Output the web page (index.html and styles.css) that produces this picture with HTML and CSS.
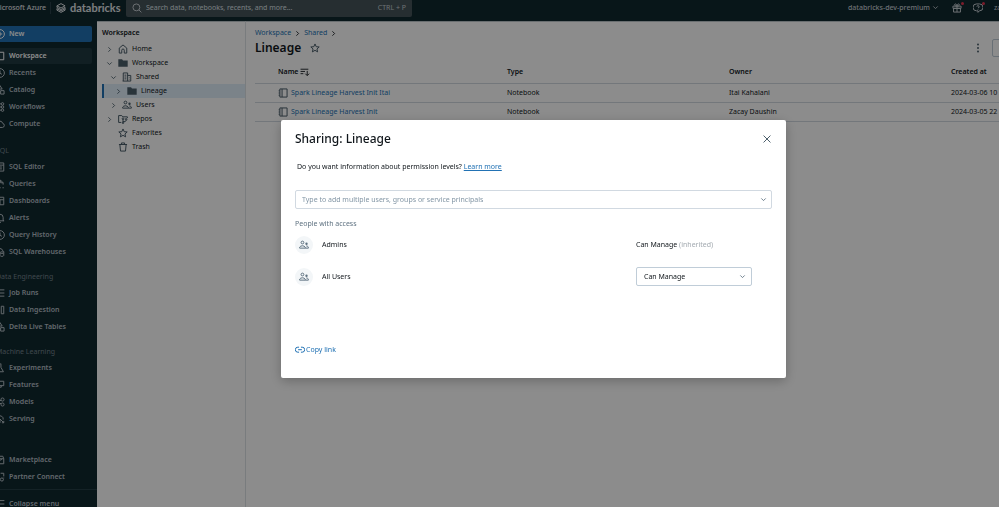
FILE: index.html
```html
<!DOCTYPE html>
<html lang="en">
<head>
    <meta charset="UTF-8">
    <meta name="viewport" content="width=device-width, initial-scale=1.0">
    <title>Lineage - Databricks</title>
    <link rel="stylesheet" href="styles.css">
</head>
<body>
    <!-- Icon set -->
    <svg class="sprite" aria-hidden="true">
        <symbol id="i-chevron-right" viewBox="0 0 16 16"><path d="M5.5 3l5 5-5 5"/></symbol>
        <symbol id="i-chevron-down" viewBox="0 0 16 16"><path d="M3 5.5l5 5 5-5"/></symbol>
        <symbol id="i-search" viewBox="0 0 16 16"><circle cx="7" cy="7" r="5.5"/><path d="M11 11l4 4"/></symbol>
        <symbol id="i-plus" viewBox="0 0 16 16"><circle cx="8" cy="8" r="7"/><path d="M8 4.5v7M4.5 8h7"/></symbol>
        <symbol id="i-square" viewBox="0 0 16 16"><path d="M2 2h12v12H2z"/></symbol>
        <symbol id="i-clock" viewBox="0 0 16 16"><circle cx="8" cy="8" r="7"/><path d="M8 4v4.5l3 1.5"/></symbol>
        <symbol id="i-shapes" viewBox="0 0 16 16"><path d="M8 1l3.5 5.500h-7zM9 9h5.500v5.500H9z"/><circle cx="4" cy="11.500" r="3"/></symbol>
        <symbol id="i-flow" viewBox="0 0 16 16"><path d="M1 3h9M3 8h8M3 8a2.500 2.500 0 0 0 0 5h7"/><circle cx="12" cy="3" r="2"/><circle cx="12" cy="8" r="2"/><circle cx="12" cy="13" r="2"/></symbol>
        <symbol id="i-cloud" viewBox="0 0 16 16"><path d="M4 13.500a3.300 3.300 0 0 1-.5-6.500 4.500 4.500 0 0 1 8.800 0 3.300 3.300 0 0 1-.3 6.500z"/></symbol>
        <symbol id="i-editor" viewBox="0 0 16 16"><path d="M2 1.500h12v13H2zM2 5h12M5 8h6M5 11h6"/></symbol>
        <symbol id="i-query" viewBox="0 0 16 16"><path d="M2 14V2h7l4 4v3M9 2v4h4M7 14h2M12 14h2"/></symbol>
        <symbol id="i-dashboard" viewBox="0 0 16 16"><path d="M2 2h12v12H2zM2 6h12M8 6v8"/></symbol>
        <symbol id="i-bell" viewBox="0 0 16 16"><path d="M3 12V7a5 5 0 0 1 10 0v5l1.500.5h-13zM6.500 15h3"/></symbol>
        <symbol id="i-warehouse" viewBox="0 0 16 16"><path d="M4 11.500a3 3 0 0 1-.5-5.500 4.500 4.500 0 0 1 8.800 0 3 3 0 0 1 2 2M8 9v4.500c0 2 6 2 6 0V9"/><ellipse cx="11" cy="9" rx="3" ry="1.300"/></symbol>
        <symbol id="i-list" viewBox="0 0 16 16"><path d="M5 3h10M5 8h10M5 13h10M1 3h1M1 8h1M1 13h1"/></symbol>
        <symbol id="i-ingest" viewBox="0 0 16 16"><path d="M1 8h7M5 5l3 3-3 3M10 2h4v12h-4z"/></symbol>
        <symbol id="i-flask" viewBox="0 0 16 16"><path d="M6 1.500h4M6.500 2v5L2.500 14h11L9.500 7V2"/></symbol>
        <symbol id="i-layers" viewBox="0 0 16 16"><path d="M6 2h8v7H6zM10 9v2.500H3.500V5H6M7 12v2.500H1"/></symbol>
        <symbol id="i-models" viewBox="0 0 16 16"><circle cx="4" cy="8" r="2.500"/><circle cx="12" cy="4" r="2.500"/><circle cx="12" cy="12" r="2.500"/><path d="M6 7l4-2M6 9l4 2"/></symbol>
        <symbol id="i-serving" viewBox="0 0 16 16"><path d="M3 12a5 5 0 0 1 2-8 5 5 0 0 1 8 5M8 14V8l6 6M11 14h3v-3"/></symbol>
        <symbol id="i-store" viewBox="0 0 16 16"><path d="M2 6l1.500-4h9L14 6v8H2zM2 6h12M5 6c0 3 6 3 6 0"/></symbol>
        <symbol id="i-partner" viewBox="0 0 16 16"><path d="M2 2h5M9 2h5v5M14 9v1M2 14v-5"/><circle cx="11" cy="12" r="2.500"/></symbol>
        <symbol id="i-collapse" viewBox="0 0 16 16"><path d="M1 2.500h14M6 8h9M1 13.500h14M4 5.500L1.500 8 4 10.500"/></symbol>
        <symbol id="i-home" viewBox="0 0 16 16"><path d="M2 6.500L8 1.500l6 5v8h-4V10a2 2 0 0 0-4 0v4.500H2z"/></symbol>
        <symbol id="i-folder" viewBox="0 0 16 16"><path class="solid" d="M.5 2h6l1.500 2h7.500v10H.5z"/></symbol>
        <symbol id="i-building" viewBox="0 0 16 16"><path d="M2 14.500v-13h7v13M9 5.500h5v9H1M4 5h3M4 8h3M4 11h3M11 8.500h1M11 11.500h1"/></symbol>
        <symbol id="i-users" viewBox="0 0 16 16"><circle cx="5.500" cy="4" r="2.200"/><path d="M1 13v-1.500c1.500-3 7.500-3 9 0V13zM10 13h5v-1.500c-.7-1.500-2-2-3.500-2"/><circle class="solid" cx="12" cy="6" r="1.900"/></symbol>
        <symbol id="i-repo" viewBox="0 0 16 16"><path d="M5 13.500H1v-11h5l1.500 2H15v2M8 8v6M8 12h3c2 0 2-2 2-3"/><circle cx="8" cy="7.500" r="1.300"/><circle cx="8" cy="14" r="1.300"/><circle cx="13" cy="8.500" r="1.300"/></symbol>
        <symbol id="i-star" viewBox="0 0 16 16"><path d="M8 1.500l1.900 4.400 4.800.4-3.600 3.200 1.100 4.700L8 11.700l-4.200 2.500 1.100-4.700L1.300 6.300l4.800-.4z"/></symbol>
        <symbol id="i-trash" viewBox="0 0 16 16"><path d="M1.500 4h13M3 4l1 10.500h8L13 4M5.500 4V1.500h5V4"/></symbol>
        <symbol id="i-sort" viewBox="0 0 18 16"><path d="M1 3h14M1 7h8M1 11h5M13 6v8M9.500 11l3.500 3.500 3.500-3.500"/></symbol>
        <symbol id="i-notebook" viewBox="0 0 16 16"><path d="M3 1.500h11.500v13H3zM6.500 1.500v13M1 4.500h2M1 8h2M1 11.500h2"/></symbol>
        <symbol id="i-kebab" viewBox="0 0 16 16"><circle class="solid" cx="8" cy="2.500" r="1.600"/><circle class="solid" cx="8" cy="8" r="1.600"/><circle class="solid" cx="8" cy="13.500" r="1.600"/></symbol>
        <symbol id="i-gift" viewBox="0 0 16 16"><path d="M1.500 5h13v3.500h-13zM2.500 8.500h11v6h-11zM8 5v9.500M8 5C3 5 3.500 1.500 5.500 1.500S8 5 8 5s.5-3.500 2.500-3.500S13 5 8 5"/></symbol>
        <symbol id="i-help" viewBox="0 0 16 16"><path d="M5.500 12.500a5.500 5.500 0 0 1 0-11h5a5.500 5.500 0 0 1 0 11H10L8 15v-2.500zM6.200 5.800a1.800 1.800 0 1 1 1.800 2M8 9.500v1"/></symbol>
        <symbol id="i-close" viewBox="0 0 16 16"><path d="M2.500 2.500l11 11M13.500 2.500l-11 11"/></symbol>
        <symbol id="i-link" viewBox="0 0 16 16"><path d="M6.500 3.500h-2a4 4 0 0 0 0 8h2M9.500 3.500h2a4 4 0 0 1 0 8h-2M5 7.500h6"/></symbol>
        <symbol id="i-logo" viewBox="0 0 16 16"><path d="M1.500 4.500L8 1l6.500 3.500L8 8zM1.500 4.500V7L8 10.500 14.500 7M1.500 9.200L8 12.700l6.500-3.500V7M1.500 8.800v2.700L8 15l6.500-3.500V9"/></symbol>
    </svg>

    <div class="app">
        <header class="topbar">
            <a class="azure" href="#">Microsoft Azure</a>
            <a class="brand" href="#"><svg class="icon"><use href="#i-logo"/></svg>databricks</a>
            <label class="search">
                <svg class="icon"><use href="#i-search"/></svg>
                <input type="text" aria-label="Search" placeholder="Search data, notebooks, recents, and more...">
                <span>CTRL + P</span>
            </label>
            <div class="account">
                <button class="workspace-switch">databricks-dev-premium <svg class="icon small"><use href="#i-chevron-down"/></svg></button>
                <button class="notify" aria-label="What's new"><svg class="icon"><use href="#i-gift"/></svg></button>
                <button class="notify" aria-label="Help"><svg class="icon"><use href="#i-help"/></svg></button>
                <a class="user" href="#">zacay</a>
            </div>
        </header>

        <div class="columns">
            <nav class="sidebar">
                <button class="new"><svg class="icon"><use href="#i-plus"/></svg>New</button>
                <ul class="top">
                    <li><a class="active" href="#"><svg class="icon"><use href="#i-square"/></svg>Workspace</a></li>
                    <li><a href="#"><svg class="icon"><use href="#i-clock"/></svg>Recents</a></li>
                    <li><a href="#"><svg class="icon"><use href="#i-shapes"/></svg>Catalog</a></li>
                    <li><a href="#"><svg class="icon"><use href="#i-flow"/></svg>Workflows</a></li>
                    <li><a href="#"><svg class="icon"><use href="#i-cloud"/></svg>Compute</a></li>
                </ul>
                <h2>SQL</h2>
                <ul>
                    <li><a href="#"><svg class="icon"><use href="#i-editor"/></svg>SQL Editor</a></li>
                    <li><a href="#"><svg class="icon"><use href="#i-query"/></svg>Queries</a></li>
                    <li><a href="#"><svg class="icon"><use href="#i-dashboard"/></svg>Dashboards</a></li>
                    <li><a href="#"><svg class="icon"><use href="#i-bell"/></svg>Alerts</a></li>
                    <li><a href="#"><svg class="icon"><use href="#i-clock"/></svg>Query History</a></li>
                    <li><a href="#"><svg class="icon"><use href="#i-warehouse"/></svg>SQL Warehouses</a></li>
                </ul>
                <h2>Data Engineering</h2>
                <ul>
                    <li><a href="#"><svg class="icon"><use href="#i-list"/></svg>Job Runs</a></li>
                    <li><a href="#"><svg class="icon"><use href="#i-ingest"/></svg>Data Ingestion</a></li>
                    <li><a href="#"><svg class="icon"><use href="#i-shapes"/></svg>Delta Live Tables</a></li>
                </ul>
                <h2>Machine Learning</h2>
                <ul>
                    <li><a href="#"><svg class="icon"><use href="#i-flask"/></svg>Experiments</a></li>
                    <li><a href="#"><svg class="icon"><use href="#i-layers"/></svg>Features</a></li>
                    <li><a href="#"><svg class="icon"><use href="#i-models"/></svg>Models</a></li>
                    <li><a href="#"><svg class="icon"><use href="#i-serving"/></svg>Serving</a></li>
                </ul>
                <ul class="partners">
                    <li><a href="#"><svg class="icon"><use href="#i-store"/></svg>Marketplace</a></li>
                    <li><a href="#"><svg class="icon"><use href="#i-partner"/></svg>Partner Connect</a></li>
                </ul>
                <button class="collapse"><svg class="icon"><use href="#i-collapse"/></svg>Collapse menu</button>
            </nav>

            <aside class="tree">
                <h2>Workspace</h2>
                <ul>
                    <li><a href="#"><svg class="icon small"><use href="#i-chevron-right"/></svg><svg class="icon"><use href="#i-home"/></svg>Home</a></li>
                    <li><a href="#"><svg class="icon small"><use href="#i-chevron-down"/></svg><svg class="icon"><use href="#i-folder"/></svg>Workspace</a></li>
                    <li><a class="level-1" href="#"><svg class="icon small"><use href="#i-chevron-down"/></svg><svg class="icon"><use href="#i-building"/></svg>Shared</a></li>
                    <li><a class="level-2 selected" href="#"><svg class="icon small"><use href="#i-chevron-right"/></svg><svg class="icon"><use href="#i-folder"/></svg>Lineage</a></li>
                    <li><a class="level-1" href="#"><svg class="icon small"><use href="#i-chevron-right"/></svg><svg class="icon"><use href="#i-users"/></svg>Users</a></li>
                    <li><a href="#"><svg class="icon small"><use href="#i-chevron-right"/></svg><svg class="icon"><use href="#i-repo"/></svg>Repos</a></li>
                    <li><a href="#"><svg class="icon small"></svg><svg class="icon"><use href="#i-star"/></svg>Favorites</a></li>
                    <li><a href="#"><svg class="icon small"></svg><svg class="icon"><use href="#i-trash"/></svg>Trash</a></li>
                </ul>
            </aside>

            <main class="content">
                <div class="crumbs">
                    <a href="#">Workspace</a><svg class="icon small"><use href="#i-chevron-right"/></svg>
                    <a href="#">Shared</a><svg class="icon small"><use href="#i-chevron-right"/></svg>
                </div>
                <div class="title-row">
                    <h1>Lineage</h1>
                    <button class="plain" aria-label="Favorite"><svg class="icon"><use href="#i-star"/></svg></button>
                    <button class="plain more" aria-label="More"><svg class="icon"><use href="#i-kebab"/></svg></button>
                    <button class="share" aria-label="Share"></button>
                </div>
                <table>
                    <thead>
                        <tr>
                            <th class="name">Name <svg class="icon"><use href="#i-sort"/></svg></th>
                            <th>Type</th>
                            <th>Owner</th>
                            <th>Created at</th>
                        </tr>
                    </thead>
                    <tbody>
                        <tr>
                            <td class="name"><a href="#"><svg class="icon"><use href="#i-notebook"/></svg>Spark Lineage Harvest Init Itai</a></td>
                            <td>Notebook</td>
                            <td>Itai Kahalani</td>
                            <td>2024-03-06 10</td>
                        </tr>
                        <tr>
                            <td class="name"><a href="#"><svg class="icon"><use href="#i-notebook"/></svg>Spark Lineage Harvest Init</a></td>
                            <td>Notebook</td>
                            <td>Zacay Daushin</td>
                            <td>2024-03-05 22</td>
                        </tr>
                    </tbody>
                </table>
            </main>
        </div>
    </div>

    <!-- Sharing dialog -->
    <div class="backdrop">
        <div class="modal" role="dialog" aria-labelledby="modalTitle">
            <div class="modal-head">
                <h2 id="modalTitle">Sharing: Lineage</h2>
                <button class="plain" aria-label="Close"><svg class="icon"><use href="#i-close"/></svg></button>
            </div>
            <p class="info">Do you want information about permission levels? <a href="#">Learn more</a></p>
            <label class="combo">
                <input type="text" aria-label="Add users" placeholder="Type to add multiple users, groups or service principals">
                <svg class="icon small"><use href="#i-chevron-down"/></svg>
            </label>
            <h3>People with access</h3>
            <ul class="people">
                <li>
                    <span class="avatar"><svg class="icon"><use href="#i-users"/></svg></span>
                    <span class="who">Admins</span>
                    <span class="permission">Can Manage <em>(inherited)</em></span>
                </li>
                <li>
                    <span class="avatar"><svg class="icon"><use href="#i-users"/></svg></span>
                    <label class="who" for="allUsers">All Users</label>
                    <span class="permission picker">
                        <select id="allUsers"><option>Can Manage</option></select>
                        <svg class="icon small"><use href="#i-chevron-down"/></svg>
                    </span>
                </li>
            </ul>
            <button class="copy"><svg class="icon"><use href="#i-link"/></svg>Copy link</button>
        </div>
    </div>
</body>
</html>
```
FILE: styles.css
```css
* {
    box-sizing: border-box;
}

body {
    margin: 0;
    height: 100vh;
    overflow: hidden;
    background-color: #ffffff;
    color: #11171c;
    font-family: "Noto Sans", "Open Sans", sans-serif;
    font-size: 7px;
    line-height: 12px;
}

h1, h2, h3, p, ul {
    margin: 0;
    padding: 0;
    font-size: 7px;
}

ul {
    list-style: none;
}

a {
    color: inherit;
    text-decoration: none;
}

button, input, select {
    margin: 0;
    padding: 0;
    border: 0;
    background: none;
    color: inherit;
    font: inherit;
}

input {
    min-width: 0;
    outline: none;
}

.sprite {
    position: absolute;
    width: 0;
    height: 0;
}

.icon {
    flex: none;
    width: 10px;
    height: 10px;
    fill: none;
    stroke: currentColor;
    stroke-width: 1.6;
}

.icon.small {
    width: 7px;
    height: 7px;
    stroke-width: 2;
}

.solid {
    fill: currentColor;
    stroke: none;
}

/* The app is wider than the window on both sides */
.app {
    display: flex;
    flex-direction: column;
    height: 100vh;
    margin: 0 -40px 0 -10px;
    overflow: hidden;
}

/* Top bar */
.topbar {
    display: flex;
    flex: none;
    align-items: center;
    height: 27px;
    margin-top: -6px;
    background-color: #10282f;
    color: #c4ccd1;
}

.azure {
    display: flex;
    justify-content: flex-end;
    width: 61px;
    padding-right: 4px;
    border-right: 1px solid #2a4049;
    color: #e0e5e8;
    font-weight: 500;
    white-space: nowrap;
}

.brand {
    display: flex;
    align-items: center;
    gap: 4px;
    width: 75px;
    padding-left: 5px;
    color: #e0e5e8;
    font-family: Lato, sans-serif;
    font-size: 11px;
    font-weight: 700;
}

.search {
    display: flex;
    align-items: center;
    gap: 4px;
    width: 286px;
    height: 18px;
    padding: 0 6px;
    border-radius: 2px;
    background-color: #46545a;
}

.search input {
    flex: 1;
}

.search input::placeholder {
    color: #dce2e6;
    opacity: 1;
}

.account {
    display: flex;
    align-items: center;
    gap: 11px;
    margin-left: auto;
}

.workspace-switch {
    display: flex;
    align-items: center;
    gap: 2px;
    margin-right: 2px;
    font-weight: 500;
}

.notify {
    position: relative;
    display: flex;
}

.notify::after {
    content: "";
    position: absolute;
    top: -1px;
    right: -2px;
    width: 3px;
    height: 3px;
    border-radius: 50%;
    background-color: #e5344f;
}

.user {
    width: 45px;
}

/* Sidebar */
.columns {
    display: flex;
    flex: 1;
    min-height: 0;
}

.sidebar {
    flex: none;
    width: 107px;
    padding-top: 5px;
    background-color: #10282f;
    color: #b4bfc5;
    white-space: nowrap;
}

.sidebar a, .sidebar button {
    display: flex;
    align-items: center;
    gap: 4px;
    width: 102px;
    height: 16px;
    padding-left: 5px;
    border-radius: 2px;
    font-weight: 600;
}

.sidebar li + li {
    margin-top: 1px;
}

.sidebar .new {
    background-color: #2272b4;
    color: #ffffff;
}

.sidebar .active {
    background-color: #203940;
    color: #ffffff;
}

.sidebar h2 {
    margin: 11px 0 2px 6px;
    color: #74848d;
    font-weight: 400;
}

.sidebar .top {
    margin: 6px 0 13px;
}

.sidebar .partners {
    margin-top: 25px;
    padding-bottom: 4px;
}

.sidebar .collapse {
    width: 107px;
    height: 28px;
    border-top: 1px solid #253e46;
    border-radius: 0;
}

/* Workspace tree */
.tree {
    flex: none;
    width: 149px;
    padding: 5px 0 0 5px;
    border-top: 1px solid #c0c8cd;
    border-right: 1px solid #dde2e6;
}

.tree h2 {
    margin-bottom: 3px;
    font-weight: 600;
}

.tree a {
    display: flex;
    align-items: center;
    gap: 4px;
    height: 14px;
    padding-left: 4px;
}

.tree .icon {
    color: #4c5f6b;
}

.tree .icon:nth-child(2) {
    margin-left: 1px;
}

.tree .level-1 {
    padding-left: 8px;
}

.tree .level-2 {
    padding-left: 13px;
}

.tree .selected {
    background-color: #e0eefa;
    box-shadow: inset 2px 0 #2272b4;
}

/* Folder content */
.content {
    flex: 1;
    min-width: 0;
    padding: 5px 0 0 9px;
    border-top: 1px solid #c0c8cd;
}

.crumbs {
    display: flex;
    align-items: center;
    gap: 3px;
}

.crumbs a, td a {
    color: #2272b4;
}

.title-row {
    display: flex;
    align-items: center;
    height: 18px;
    gap: 9px;
}

h1 {
    font-size: 12px;
    font-weight: 600;
}

.plain {
    display: flex;
    color: #4c5f6b;
}

.more {
    margin-left: auto;
}

.share {
    width: 47px;
    height: 18px;
    border: 1px solid #c0cdd8;
    border-radius: 2px;
}

table {
    width: calc(100% + 134px);
    margin-top: 5px;
    border-collapse: collapse;
    table-layout: fixed;
}

th, td {
    height: 19px;
    padding: 0;
    border-bottom: 1px solid #d1d9e1;
    text-align: left;
    white-space: nowrap;
}

th {
    height: 21px;
    font-weight: 600;
}

.name {
    width: 252px;
    padding-left: 23px;
}

th .icon {
    vertical-align: middle;
}

td a {
    display: flex;
    align-items: center;
    gap: 3px;
}

td .icon {
    color: #4c5f6b;
}

/* Sharing dialog */
.backdrop {
    position: fixed;
    inset: 0;
    display: flex;
    justify-content: center;
    align-items: flex-start;
    padding: 120px 0 0 68px;
    background-color: rgba(0, 0, 0, 0.45);
}

.modal {
    width: 505px;
    padding: 12px 14px 22px;
    border-radius: 2px;
    background-color: #ffffff;
    box-shadow: 0 3px 12px rgba(0, 0, 0, 0.25);
}

.modal-head {
    display: flex;
    justify-content: space-between;
    align-items: center;
    height: 14px;
}

.modal-head h2 {
    font-size: 12px;
    font-weight: 500;
}

.info {
    margin: 15px 2px 17px;
}

.info a {
    color: #2272b4;
    text-decoration: underline;
}

.combo {
    display: flex;
    align-items: center;
    height: 19px;
    padding: 0 4px 0 6px;
    border: 1px solid #d1d9e1;
    border-radius: 2px;
    color: #5f7281;
}

.combo input {
    flex: 1;
}

.combo input::placeholder {
    color: #8396a5;
    opacity: 1;
}

.modal h3 {
    margin: 9px 0 5px;
    color: #5f7281;
    font-weight: 400;
}

.people li {
    display: flex;
    align-items: center;
    gap: 9px;
    height: 19px;
    margin-bottom: 13px;
}

.avatar {
    display: flex;
    justify-content: center;
    align-items: center;
    width: 18px;
    height: 18px;
    border-radius: 50%;
    background-color: #f3f6f8;
    color: #5f7281;
}

.permission {
    width: 116px;
    margin: 0 20px 0 auto;
}

.permission em {
    color: #a3aab0;
    font-style: normal;
}

.picker {
    display: flex;
    align-items: center;
    height: 19px;
    border: 1px solid #c0cdd8;
    border-radius: 2px;
}

.picker select {
    flex: 1;
    height: 17px;
    padding-left: 7px;
    appearance: none;
}

.picker .icon {
    margin-right: 5px;
    color: #5f7281;
}

.copy {
    display: flex;
    align-items: center;
    gap: 1px;
    margin-top: 58px;
    color: #2272b4;
}
```
